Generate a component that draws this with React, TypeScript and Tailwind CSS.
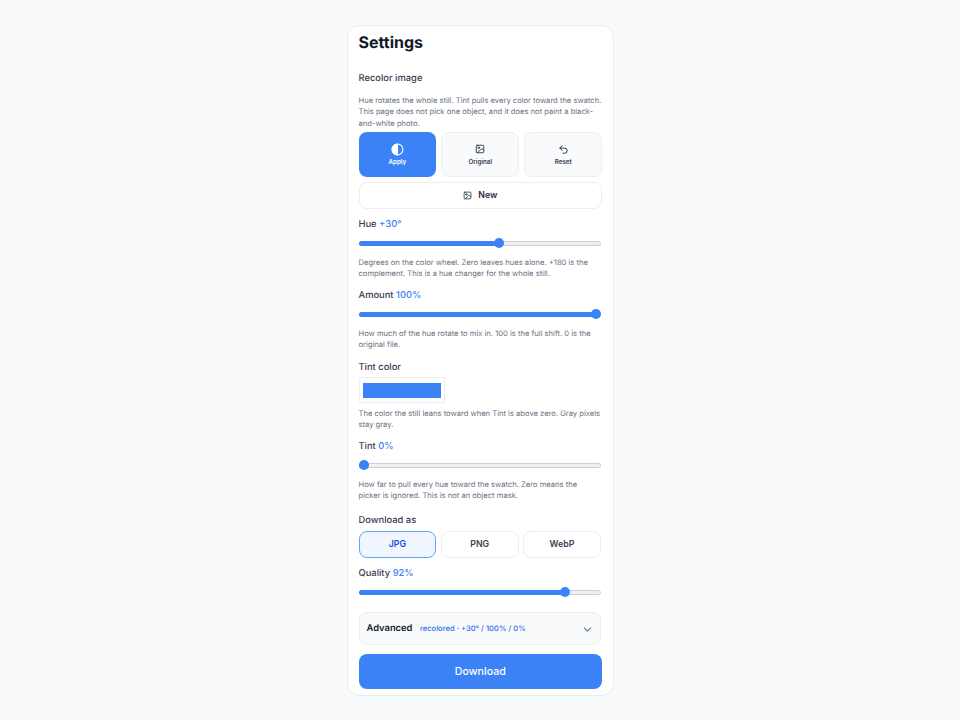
import { ChevronDown, Image, Undo2 } from "lucide-react";

function Slider({ label, value, pct, className, help }: { label: string; value: string; pct: number; className: string; help?: string }) {
  return (
    <div className={className}>
      <div className="h-[14px] text-[9.375px] leading-[14px] font-medium text-[#374151]">
        {label} <span className="text-[#3b82f6]">{value}</span>
      </div>
      <div className="relative mt-[5px] h-[12px] w-[242px]">
        <div className="absolute top-[3.5px] right-0 left-0 h-[5px] rounded-full border border-[#cfcfcf] bg-[#efefef]" />
        <div
          className="absolute top-[3.5px] left-0 h-[5px] rounded-full bg-[#3b82f6]"
          style={{ width: `${5 + pct * 2.32}px` }}
        />
        <div
          className="absolute top-[1px] h-[10px] w-[10px] rounded-full bg-[#3b82f6]"
          style={{ left: `${pct * 2.32}px` }}
        />
      </div>
      {help && <p className="mt-[8px] w-[242.6px] text-[7.6px] leading-[11.25px] text-[#6b7280]">{help}</p>}
    </div>
  );
}

function Contrast() {
  return (
    <svg viewBox="0 0 24 24" className="h-[13px] w-[13px]" fill="none" stroke="currentColor" strokeWidth={2}>
      <circle cx="12" cy="12" r="10" />
      <path d="M12 2a10 10 0 0 0 0 20z" fill="currentColor" />
    </svg>
  );
}

export default function App() {
  return (
    <div className="min-h-[720px] bg-[#f8fafc] pt-[25px] font-['Inter',sans-serif] [text-rendering:geometricPrecision]">
      <div className="mx-auto h-[671px] w-[267px] rounded-xl border border-[#e9ecf0] bg-white px-[11px] pt-[6px]">
        <h2 className="h-[20px] text-[16px] leading-[20px] font-bold text-[#111827]">Settings</h2>
        <h3 className="mt-[19.5px] h-[14px] text-[9.375px] leading-[14px] font-medium text-[#374151]">Recolor image</h3>
        <p className="mt-[9.5px] w-[244px] text-[7.6px] leading-[11.25px] text-[#6b7280]">
          Hue rotates the whole still. Tint pulls every color toward the swatch. This page does not pick one object, and it does not paint a black-and-white photo.
        </p>
        <div className="mt-[3.25px] grid w-[243.6px] grid-cols-3 gap-[5.3px]">
          <button className="flex h-[45px] flex-col items-center justify-center gap-[2px] rounded-lg bg-[#3b82f6] text-[6.25px] leading-[9px] font-semibold text-white">
            <Contrast />
            Apply
          </button>
          <button className="flex h-[45px] flex-col items-center justify-center gap-[2px] rounded-lg border border-[#eceef1] bg-[#f9fafb] text-[6.25px] leading-[9px] font-semibold text-[#374151]">
            <Image size={10} className="my-[1.5px] text-[#1f2937]" />
            Original
          </button>
          <button className="flex h-[45px] flex-col items-center justify-center gap-[2px] rounded-lg border border-[#eceef1] bg-[#f9fafb] text-[6.25px] leading-[9px] font-semibold text-[#374151]">
            <Undo2 size={11} className="my-[1px] text-[#1f2937]" />
            Reset
          </button>
        </div>
        <button className="mt-[5px] flex h-[27px] w-[243.6px] items-center justify-center gap-[6px] rounded-lg border border-[#eceef1] bg-white text-[8.75px] font-semibold text-[#1f2937]">
          <Image size={9} />
          New
        </button>

        <Slider
          className="mt-[9px]"
          label="Hue"
          value="+30°"
          pct={58.33}
          help="Degrees on the color wheel. Zero leaves hues alone. +180 is the complement. This is a hue changer for the whole still."
        />
        <Slider
          className="mt-[9.5px]"
          label="Amount"
          value="100%"
          pct={100}
          help="How much of the hue rotate to mix in. 100 is the full shift. 0 is the original file."
        />

        <div className="mt-[10.5px] h-[14px] text-[9.375px] leading-[14px] font-medium text-[#374151]">Tint color</div>
        <div className="mt-[2px] flex h-[26px] w-[86px] items-center justify-center rounded-[2px] border border-[#eceef1] bg-white">
          <div className="h-[15px] w-[78px] bg-[#3b82f6]" />
        </div>
        <p className="mt-[5px] w-[242.6px] text-[7.6px] leading-[11.25px] text-[#6b7280]">
          The color the still leans toward when Tint is above zero. Gray pixels stay gray.
        </p>

        <Slider
          className="mt-[9.5px]"
          label="Tint"
          value="0%"
          pct={0}
          help="How far to pull every hue toward the swatch. Zero means the picker is ignored. This is not an object mask."
        />

        <div className="mt-[12.5px] h-[14px] text-[9.375px] leading-[14px] font-medium text-[#374151]">Download as</div>
        <div className="mt-[3px] grid w-[242.4px] grid-cols-3 gap-[4.5px]">
          <button className="h-[27px] rounded-lg border border-[#60a5fa] bg-[#eff6ff] text-[8.75px] font-semibold text-[#1d4ed8]">JPG</button>
          <button className="h-[27px] rounded-lg border border-[#eceef1] bg-white text-[8.75px] font-semibold text-[#374151]">PNG</button>
          <button className="h-[27px] rounded-lg border border-[#eceef1] bg-white text-[8.75px] font-semibold text-[#374151]">WebP</button>
        </div>

        <Slider className="mt-[9px]" label="Quality" value="92%" pct={86.67} />

        <div className="mt-[14px] flex h-[33px] w-[242px] items-center rounded-lg border border-[#eceef1] bg-[#f9fafb] pt-[1px] pr-[6px] pl-[7px]">
          <span className="text-[9.375px] font-semibold text-[#111827]">Advanced</span>
          <span className="ml-[7.5px] text-[7.6px] font-medium text-[#2f6fe4]">recolored · +30° / 100% / 0%</span>
          <ChevronDown size={13} className="ml-auto text-[#6b7280]" />
        </div>

        <button className="mt-[9px] h-[35px] w-[243.6px] rounded-lg bg-[#3b82f6] text-[10.67px] font-medium text-white">
          Download
        </button>
      </div>
    </div>
  );
}
